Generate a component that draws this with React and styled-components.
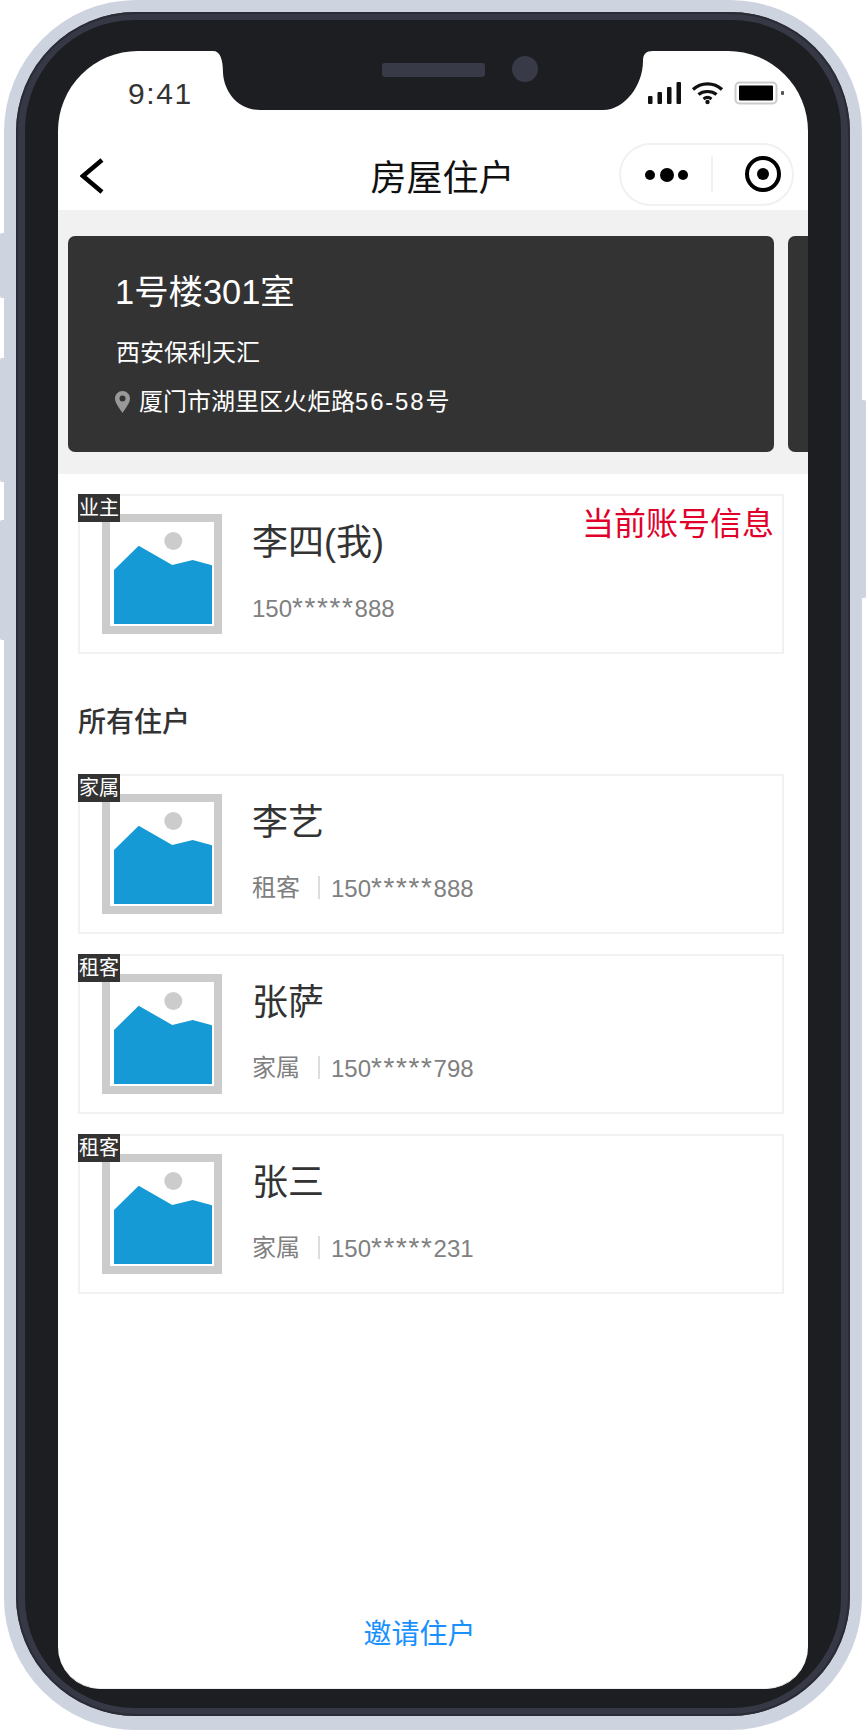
import React from "react";
import styled, { createGlobalStyle } from "styled-components";

const Global = createGlobalStyle`
  html, body { margin: 0; padding: 0; background: #fff; }
  body { font-family: "Liberation Sans", "Noto Sans CJK SC", sans-serif; }
  * { box-sizing: border-box; }
`;

const Page = styled.div`
  position: relative;
  width: 866px;
  height: 1730px;
  overflow: hidden;
  background: #fff;
`;
const SideKey = styled.div`
  position: absolute;
  width: 12px;
  top: ${(p) => p.$top}px;
  height: ${(p) => p.$h}px;
  ${(p) => (p.$right ? "right: 0;" : "left: 0;")}
  background: #cdd3df;
  border-radius: 2px;
`;
const Shell = styled.div`
  position: relative;
  margin-left: 4px;
  width: 858px;
  height: 1730px;
  padding: 12px 12px 14px 12px;
  background: #cdd3df;
  border-radius: 132px;
`;
const Rim = styled.div`
  height: 100%;
  padding: 8px 9px 8px 9px;
  background: #363945;
  border-radius: 120px;
  box-shadow: inset 0 0 0 2px #2a2c35;
`;
const Bezel = styled.div`
  height: 100%;
  padding: 31px 33px 19px 33px;
  background: #1d1e22;
  border-radius: 110px;
`;
const Screen = styled.div`
  position: relative;
  display: flex;
  flex-direction: column;
  height: 100%;
  overflow: hidden;
  background: #fff;
  border-radius: 80px 80px 42px 42px;
  border-bottom: 1px solid #eee;
`;
const Notch = styled.svg`
  position: absolute;
  left: 155px;
  top: 0;
  display: block;
`;
const StatusBar = styled.div`
  display: flex;
  justify-content: space-between;
  align-items: center;
  flex: 0 0 81px;
  padding: 3px 24px 0 70px;
`;
const Clock = styled.div`
  font-size: 30px;
  line-height: 36px;
  letter-spacing: 1.6px;
  color: #333;
  margin-top: 1px;
`;
const Nav = styled.div`
  position: relative;
  display: flex;
  align-items: center;
  justify-content: space-between;
  flex: 0 0 78px;
  padding: 6px 14px 0 22px;
`;
const BackIcon = styled.svg`
  display: block;
  margin-top: 3px;
`;
const NavTitle = styled.div`
  position: absolute;
  left: 19px;
  right: 0;
  top: 22px;
  text-align: center;
  font-size: 36px;
  line-height: 50px;
  color: #111;
`;
const Capsule = styled.div`
  display: flex;
  align-items: center;
  width: 175px;
  height: 63px;
  border: 2px solid #f1f1f1;
  border-radius: 32px;
  background: #fff;
`;
const CapsuleMore = styled.div`
  flex: 0 0 90px;
  display: flex;
  align-items: center;
  justify-content: center;
  height: 36px;
  padding: 2px 0 0 4px;
`;
const CapsuleClose = styled.div`
  flex: 1;
  display: flex;
  align-items: center;
  justify-content: center;
  height: 36px;
  padding-left: 20px;
  border-left: 2px solid #f1f1f1;
`;
const Band = styled.div`
  display: flex;
  gap: 14px;
  flex: 0 0 264px;
  padding: 26px 0 22px 10px;
  background: #f1f1f1;
  overflow: hidden;
`;
const House = styled.div`
  flex: 0 0 706px;
  padding: 31px 0 0 47px;
  background: #333;
  border-radius: 7px;
  color: #fff;
`;
const HouseTitle = styled.div`
  font-size: 34.4px;
  line-height: 50px;
`;
const HouseName = styled.div`
  margin: 19px 0 0 1px;
  font-size: 24px;
  line-height: 34px;
`;
const HouseAddress = styled.div`
  display: flex;
  align-items: center;
  gap: 9px;
  margin-top: 15px;
  font-size: 24px;
  line-height: 34px;
`;
const Wide = styled.span`
  letter-spacing: 1.8px;
`;
const Main = styled.div`
  flex: 1;
  padding: 20px 24px 0 20px;
`;
const List = styled.div`
  display: flex;
  flex-direction: column;
  gap: 20px;
`;
const Person = styled.div`
  position: relative;
  display: flex;
  align-items: center;
  height: 160px;
  padding: 0 8px 0 22px;
  border: 2px solid #f1f1f1;
  background: #fff;
`;
const Badge = styled.div`
  position: absolute;
  left: -2px;
  top: -2px;
  width: 42px;
  height: 28px;
  background: #333;
  color: #fff;
  font-size: 20px;
  line-height: 28px;
  text-align: center;
`;
const PersonText = styled.div`
  margin-left: 30px;
  padding-bottom: 5px;
`;
const PersonName = styled.div`
  font-size: 36px;
  line-height: 50px;
  color: #333;
`;
const Meta = styled.div`
  display: flex;
  align-items: center;
  margin-top: 23px;
  font-size: 24px;
  line-height: 34px;
  color: #808080;
`;
const Role = styled.span`
  padding-right: 20px;
  margin-right: 11px;
  position: relative;
  &::after {
    content: "";
    position: absolute;
    right: 0;
    top: 5px;
    width: 2px;
    height: 23px;
    background: #ddd;
  }
`;
const Stars = styled.span`
  font-size: 28px;
  line-height: 34px;
  letter-spacing: 1.6px;
`;
const Current = styled.div`
  align-self: flex-start;
  margin-left: auto;
  margin-top: 8px;
  font-size: 32px;
  line-height: 40px;
  color: #e1002a;
`;
const SectionTitle = styled.div`
  height: 120px;
  padding-top: 50px;
  font-size: 28px;
  line-height: 38px;
  font-weight: 500;
  color: #333;
`;
const Footer = styled.div`
  flex: 0 0 112px;
  display: flex;
  align-items: center;
  justify-content: center;
  padding: 0 27px 0 0;
  font-size: 28px;
  color: #1890ff;
`;

const Placeholder = () => (
  <svg width="120" height="120" viewBox="0 0 120 120" style={{ display: "block", flex: "none" }}>
    <rect x="4" y="4" width="112" height="112" fill="#fff" stroke="#ccc" strokeWidth="8" />
    <circle cx="71.3" cy="27" r="9" fill="#ccc" />
    <polygon points="12,56 36.7,31.7 70.3,51 90.7,46 110,51.3 110,110 12,110" fill="#169ad5" />
  </svg>
);

const StatusIcons = () => (
  <svg width="136" height="24" viewBox="0 0 136 24" style={{ display: "block" }}>
    <rect x="0" y="15" width="4.5" height="8" rx="1" fill="#111" />
    <rect x="9.5" y="11" width="4.5" height="12" rx="1" fill="#111" />
    <rect x="19" y="6" width="4.5" height="17" rx="1" fill="#111" />
    <rect x="28.5" y="1" width="4.5" height="22" rx="1" fill="#111" />
    <path d="M45 8.5 C53 1 66 1 74 8.5" fill="none" stroke="#111" strokeWidth="3.2" />
    <path d="M50.5 13.5 C55 9.5 64 9.5 68.5 13.5" fill="none" stroke="#111" strokeWidth="3.2" />
    <path d="M55.5 18 C58 16 61 16 63.5 18" fill="none" stroke="#111" strokeWidth="3" />
    <circle cx="59.5" cy="21" r="2.2" fill="#111" />
    <rect x="87.5" y="1.5" width="41" height="21" rx="4" fill="#fff" stroke="#ccc" strokeWidth="2" />
    <rect x="91" y="4.5" width="34" height="15" rx="1" fill="#000" />
    <rect x="133" y="10" width="3" height="4" rx="1" fill="#555" />
  </svg>
);

const people = [
  { badge: "家属", name: "李艺", role: "租客", head: "150", tail: "888" },
  { badge: "租客", name: "张萨", role: "家属", head: "150", tail: "798" },
  { badge: "租客", name: "张三", role: "家属", head: "150", tail: "231" },
];

const PersonCard = ({ badge, name, role, head, tail, current }) => (
  <Person>
    <Badge>{badge}</Badge>
    <Placeholder />
    <PersonText>
      <PersonName>{name}</PersonName>
      <Meta>
        {role && <Role>{role}</Role>}
        <span>
          {head}
          <Stars>*****</Stars>
          {tail}
        </span>
      </Meta>
    </PersonText>
    {current && <Current>{current}</Current>}
  </Person>
);

export default function App() {
  return (
    <Page>
      <Global />
      <SideKey $top={233} $h={65} />
      <SideKey $top={358} $h={124} />
      <SideKey $top={520} $h={120} />
      <SideKey $right $top={400} $h={198} />
      <Shell>
        <Rim>
          <Bezel>
            <Screen>
              <StatusBar>
                <Clock>9:41</Clock>
                <StatusIcons />
              </StatusBar>
              <Nav>
                <BackIcon width="26" height="38" viewBox="0 0 26 38">
                  <path d="M22 3 L3 19 L22 35" fill="none" stroke="#000" strokeWidth="4.5" />
                </BackIcon>
                <NavTitle>房屋住户</NavTitle>
                <Capsule>
                  <CapsuleMore>
                    <svg width="46" height="16" viewBox="0 0 46 16" style={{ display: "block" }}>
                      <circle cx="5" cy="8" r="5" fill="#000" />
                      <circle cx="22" cy="8" r="7" fill="#000" />
                      <circle cx="38" cy="8" r="5" fill="#000" />
                    </svg>
                  </CapsuleMore>
                  <CapsuleClose>
                    <svg width="36" height="36" viewBox="0 0 36 36" style={{ display: "block" }}>
                      <circle cx="18" cy="18" r="16" fill="none" stroke="#000" strokeWidth="4" />
                      <circle cx="18" cy="18" r="6" fill="#000" />
                    </svg>
                  </CapsuleClose>
                </Capsule>
              </Nav>
              <Band>
                <House>
                  <HouseTitle>1号楼301室</HouseTitle>
                  <HouseName>西安保利天汇</HouseName>
                  <HouseAddress>
                    <svg width="15" height="22" viewBox="0 0 15 22" style={{ display: "block", flex: "none" }}>
                      <path
                        fillRule="evenodd"
                        d="M7.5 0 C3.4 0 0 3.3 0 7.5 C0 12.5 5.5 18.5 7.5 22 C9.5 18.5 15 12.5 15 7.5 C15 3.3 11.6 0 7.5 0 Z M7.5 4.6 A3 3 0 1 1 7.5 10.6 A3 3 0 1 1 7.5 4.6 Z"
                        fill="#999"
                      />
                    </svg>
                    <span>
                      厦门市湖里区火炬路<Wide>56-58</Wide>号
                    </span>
                  </HouseAddress>
                </House>
                <House />
              </Band>
              <Main>
                <PersonCard badge="业主" name="李四(我)" head="150" tail="888" current="当前账号信息" />
                <SectionTitle>所有住户</SectionTitle>
                <List>
                  {people.map((p) => (
                    <PersonCard key={p.name} {...p} />
                  ))}
                </List>
              </Main>
              <Footer>邀请住户</Footer>
              <Notch width="440" height="60" viewBox="0 0 440 60">
                <path
                  d="M0 0 H440 C433 0 430 3 430 10 C430 34 412 59 390 59 H47 C24 59 11 40 10 22 C10 8 7 0 0 0 Z"
                  fill="#1d1e22"
                />
                <rect x="169" y="12" width="103" height="14" rx="3" fill="#383a47" />
                <circle cx="312" cy="18" r="13" fill="#383a47" />
              </Notch>
            </Screen>
          </Bezel>
        </Rim>
      </Shell>
    </Page>
  );
}
